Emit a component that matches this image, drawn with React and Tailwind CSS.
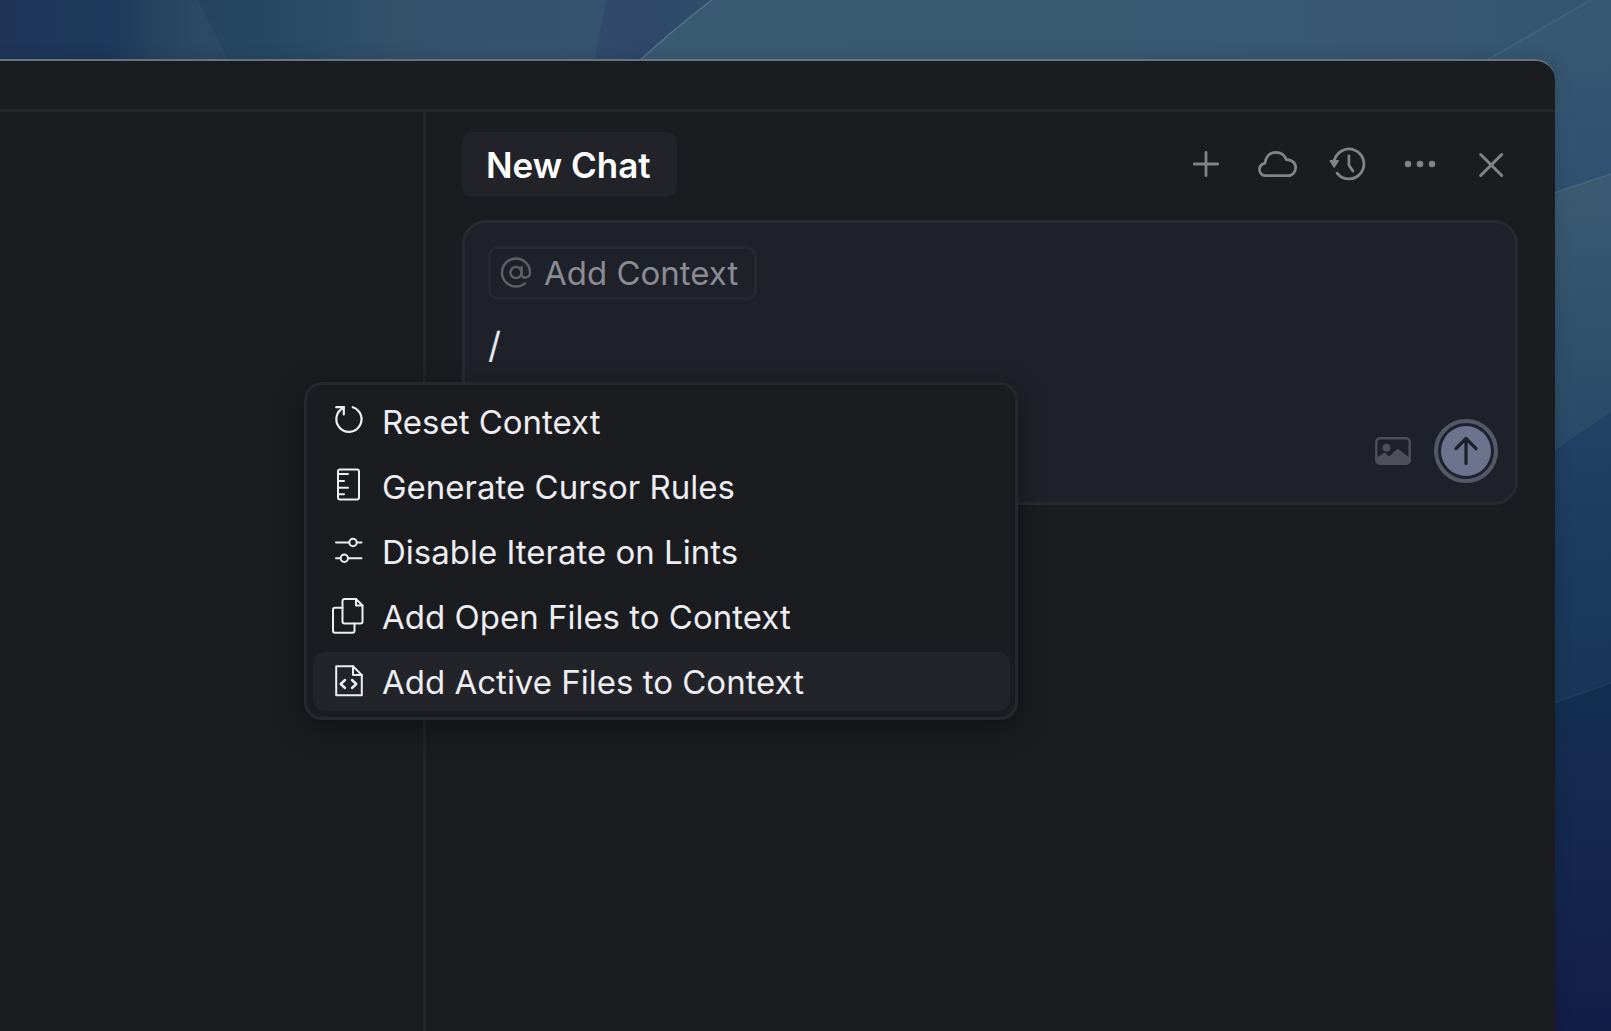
import React, { useState } from "react";

function Wallpaper() {
  return (
    <svg
      className="absolute inset-0 h-full w-full"
      viewBox="0 0 1611 1031"
      preserveAspectRatio="none"
      aria-hidden="true"
    >
      <defs>
        <linearGradient id="top" x1="0" x2="1611" y1="0" y2="0" gradientUnits="userSpaceOnUse">
          <stop offset="0" stopColor="#1e3558" />
          <stop offset="0.07" stopColor="#1e395b" />
          <stop offset="0.12" stopColor="#25435f" />
          <stop offset="0.17" stopColor="#284862" />
          <stop offset="0.25" stopColor="#33526a" />
          <stop offset="0.37" stopColor="#35536f" />
        </linearGradient>
        <linearGradient id="wedge" x1="110" x2="225" y1="0" y2="0" gradientUnits="userSpaceOnUse">
          <stop offset="0" stopColor="#2c4a64" stopOpacity="0" />
          <stop offset="1" stopColor="#2d4b65" />
        </linearGradient>
        <linearGradient id="band" x1="594" x2="712" y1="0" y2="0" gradientUnits="userSpaceOnUse">
          <stop offset="0" stopColor="#314b6c" />
          <stop offset="0.5" stopColor="#2f4769" />
          <stop offset="1" stopColor="#2e4f6c" />
        </linearGradient>
        <linearGradient id="sky" x1="640" x2="1611" y1="0" y2="0" gradientUnits="userSpaceOnUse">
          <stop offset="0" stopColor="#3a5a72" />
          <stop offset="0.5" stopColor="#395971" />
          <stop offset="0.8" stopColor="#385672" />
          <stop offset="1" stopColor="#34566d" />
        </linearGradient>
        <linearGradient id="sideA" x1="0" x2="0" y1="40" y2="193" gradientUnits="userSpaceOnUse">
          <stop offset="0" stopColor="#375872" />
          <stop offset="1" stopColor="#2f5070" />
        </linearGradient>
        <linearGradient id="sideB" x1="0" x2="0" y1="185" y2="450" gradientUnits="userSpaceOnUse">
          <stop offset="0" stopColor="#3b5a72" />
          <stop offset="0.5" stopColor="#31526b" />
          <stop offset="1" stopColor="#284a68" />
        </linearGradient>
        <linearGradient id="sideC" x1="0" x2="0" y1="420" y2="700" gradientUnits="userSpaceOnUse">
          <stop offset="0" stopColor="#234164" />
          <stop offset="0.5" stopColor="#1b3a5c" />
          <stop offset="1" stopColor="#193659" />
        </linearGradient>
        <linearGradient id="sideD" x1="0" x2="0" y1="690" y2="1031" gradientUnits="userSpaceOnUse">
          <stop offset="0" stopColor="#122f50" />
          <stop offset="0.2" stopColor="#152b50" />
          <stop offset="0.6" stopColor="#14254c" />
          <stop offset="1" stopColor="#121d48" />
        </linearGradient>
      </defs>
      <rect width="1611" height="1031" fill="url(#top)" />
      <path d="M100 0 H198 L229 62 H100Z" fill="url(#wedge)" />
      <path d="M606 0 L594 62 H712 V0Z" fill="url(#band)" />
      <path d="M712 0 Q674 29 638 62 H1611 V0Z" fill="url(#sky)" />
      <path d="M712 0 Q674 29 638 62" fill="none" stroke="#547288" strokeWidth="1.5" />
      <path d="M1591 0 L1484 62 L1555 215 H1611 V0Z" fill="url(#sideA)" />
      <path d="M1591 0 L1484 62" stroke="#41637a" strokeWidth="2" />
      <path d="M1500 211 L1611 174 V490 H1500Z" fill="url(#sideB)" />
      <path d="M1500 211 L1611 174" stroke="#48667d" strokeWidth="1.5" />
      <path d="M1500 487 L1611 412 V724 H1500Z" fill="url(#sideC)" />
      <path d="M1500 722 L1611 683 V1031 H1500Z" fill="url(#sideD)" />
      <path d="M1500 722 L1611 683" stroke="#27405f" strokeWidth="1" />
    </svg>
  );
}

const PlusIcon = () => (
  <svg width="40" height="40" viewBox="0 0 40 40" fill="none" stroke="currentColor" strokeWidth="2.8" strokeLinecap="round">
    <path d="M19 8.3v23.400M7.300 20h23.400" />
  </svg>
);

const CloudIcon = () => (
  <svg width="40" height="40" viewBox="0 0 40 40" fill="none" stroke="currentColor" strokeWidth="2.8" strokeLinejoin="round">
    <path d="M8 31.7C4 31.7 1.500 29 1.500 25.500C1.500 22.300 3.500 20.200 7 19.200C7.800 12.500 12 8.300 18 8.300C23 8.300 26.500 11 28.200 15.500C34 15.500 37.700 19 37.700 23.600C37.700 28.300 34.200 31.700 29.500 31.700Z" />
  </svg>
);

const HistoryIcon = () => (
  <svg width="40" height="40" viewBox="0 0 40 40" fill="none" stroke="currentColor" strokeWidth="2.8" strokeLinecap="round">
    <path d="M5 18.500A15 15 0 1 1 8.100 29.200" />
    <path d="M19.900 12v9l4 6" />
    <path d="M1.200 16.800h8L5.200 23.200Z" fill="currentColor" strokeWidth="1.400" strokeLinejoin="round" />
  </svg>
);

const DotsIcon = () => (
  <svg width="40" height="40" viewBox="0 0 40 40" fill="currentColor">
    <circle cx="8" cy="20" r="3.300" />
    <circle cx="20" cy="20" r="3.300" />
    <circle cx="32" cy="20" r="3.300" />
  </svg>
);

const CloseIcon = () => (
  <svg width="40" height="40" viewBox="0 0 40 40" fill="none" stroke="currentColor" strokeWidth="3" strokeLinecap="round">
    <path d="M9.700 10.500l21 21M30.700 10.500l-21 21" />
  </svg>
);

const AtIcon = () => (
  <svg width="32" height="32" viewBox="0 0 32 32" fill="none" stroke="currentColor" strokeWidth="2.400" strokeLinecap="round">
    <circle cx="16" cy="15.500" r="5.600" />
    <path d="M21.600 10.100v7.200c0 4.800 8.400 4.400 8.400-1.800A14 14 0 1 0 16 29.500c3.600 0 6.500-1 9-3.100" />
  </svg>
);

const ImageIcon = () => (
  <svg width="36" height="28" viewBox="0 0 36 28" fill="currentColor">
    <rect x="1.300" y="1.300" width="33.400" height="25.400" rx="3.500" fill="none" stroke="currentColor" strokeWidth="2.400" />
    <circle cx="11.500" cy="10.700" r="4" />
    <path d="M1.500 21l7-4.900q.900-.600 1.800 0l3.900 3.200 7.400-6.800q1.200-1 2.400 0l10.500 8.300V24q0 3-3 3H4.500q-3 0-3-3Z" />
  </svg>
);

const ArrowUpIcon = () => (
  <svg width="40" height="40" viewBox="0 0 40 40" fill="none" stroke="currentColor" strokeWidth="3.200" strokeLinecap="round" strokeLinejoin="round">
    <path d="M20 32.500v-25M10 17.500l10-10 10 10" />
  </svg>
);

const MenuIcon = ({ children }) => (
  <svg
    className="shrink-0"
    width="40"
    height="40"
    viewBox="0 0 40 40"
    fill="none"
    stroke="currentColor"
    strokeWidth="2"
    strokeLinecap="round"
    strokeLinejoin="round"
    aria-hidden="true"
  >
    {children}
  </svg>
);

const commands = [
  {
    label: "Reset Context",
    icon: (
      <>
        <path d="M24.700 5.200A12.600 12.600 0 1 1 15.600 5.800" strokeWidth="2.200" />
        <path d="M8.200 5.200h7.600v7.300" strokeWidth="2.200" strokeLinejoin="miter" />
      </>
    ),
  },
  {
    label: "Generate Cursor Rules",
    icon: (
      <>
        <rect x="10" y="2.500" width="21" height="30" rx="2" />
        <path d="M10 7.100h10M10 14h6M10 20.700h10M10 27.300h6" />
      </>
    ),
  },
  {
    label: "Disable Iterate on Lints",
    icon: (
      <>
        <path d="M8 10.500h13.200M28.800 10.500H33.500M8 26.200h4.500M20.100 26.200H33.500" />
        <circle cx="25" cy="10.500" r="3.700" />
        <circle cx="16.300" cy="26.200" r="3.700" />
      </>
    ),
  },
  {
    label: "Add Open Files to Context",
    icon: (
      <>
        <path d="M28 2H16.500q-2 0-2 2v20.500q0 2 2 2h16q2 0 2-2V8.500Z" />
        <path d="M28 2v6.500h6.500" />
        <path d="M14.500 10.700H7q-2 0-2 2v21q0 2 2 2h17.500q2 0 2-2v-7.200" />
      </>
    ),
  },
  {
    label: "Add Active Files to Context",
    icon: (
      <>
        <path d="M25 4.300H8.200v29h25.600V13.100Z" />
        <path d="M25 4.300v8.800h8.800" />
        <path d="M17 18l-4.300 4 4.300 4M24 18l4.300 4-4.300 4" strokeWidth="2.400" />
      </>
    ),
  },
];

function HeaderButton({ label, children }) {
  return (
    <button type="button" aria-label={label} className="flex size-10 items-center justify-center">
      {children}
    </button>
  );
}

function CommandMenu() {
  const [active, setActive] = useState(4);
  return (
    <div
      role="menu"
      className="absolute top-[159px] -left-[161px] z-10 flex w-[714px] flex-col gap-1.5 rounded-[18px] border-3 border-[#27282d] bg-[#1b1c20] pt-[7px] pr-[5px] pb-[6px] pl-[6px] shadow-[0_8px_28px_rgba(0,0,0,0.35)]"
    >
      {commands.map((command, i) => (
        <button
          key={command.label}
          type="button"
          role="menuitem"
          onMouseEnter={() => setActive(i)}
          className={
            i === active
              ? "flex h-[59px] items-center gap-[14px] rounded-xl bg-[#232429] pl-[15px] text-left"
              : "flex h-[59px] items-center gap-[14px] rounded-xl pl-[15px] text-left"
          }
        >
          <MenuIcon>{command.icon}</MenuIcon>
          <span className="text-[33px] leading-10 whitespace-nowrap">{command.label}</span>
        </button>
      ))}
    </div>
  );
}

function Composer() {
  const [text, setText] = useState("/");
  return (
    <form
      onSubmit={(e) => e.preventDefault()}
      className="relative flex flex-col rounded-3xl border-3 border-[#292a31] bg-[#1f212a] px-[23px] pt-[23px] pb-[19px]"
    >
      <button
        type="button"
        className="flex h-[54px] items-center gap-3 self-start rounded-[10px] border-3 border-[#272931] pr-4 pl-[9px] text-[#5e6068]"
      >
        <AtIcon />
        <span className="text-[33px] leading-10 text-[#8a8c94]">Add Context</span>
      </button>
      <textarea
        aria-label="Message"
        rows={1}
        value={text}
        onChange={(e) => setText(e.target.value)}
        className="mt-[25px] block h-12 resize-none overflow-hidden bg-transparent text-[36px] leading-10 text-[#e6e7ec] outline-none"
      />
      <div className="mt-[46px] flex items-center justify-end gap-[23px]">
        <button type="button" aria-label="Attach image" className="text-[#4d5059]">
          <ImageIcon />
        </button>
        <button
          type="submit"
          aria-label="Send"
          className="-mr-[6px] flex size-16 items-center justify-center rounded-full border-4 border-[#555967] bg-[#1e2230] p-[3px] text-[#1b222d]"
        >
          <span className="flex size-full items-center justify-center rounded-full bg-[#6c738d]">
            <ArrowUpIcon />
          </span>
        </button>
      </div>
      <CommandMenu />
    </form>
  );
}

export default function App() {
  return (
    <div className="relative h-screen overflow-hidden bg-[#1e3558] font-['Inter','Liberation_Sans',sans-serif] font-[420] text-[#ededf2]">
      <Wallpaper />
      <div className="relative flex h-full flex-col pt-[59px] pr-14">
        <div className="flex flex-1 flex-col overflow-hidden rounded-tr-[20px] border-t-2 border-t-[#66727e] bg-[#1b1c20] shadow-[0_0_16px_rgba(0,0,0,0.15)]">
          <div className="h-12 shrink-0" />
          <div className="flex flex-1 border-t-3 border-[#242529]">
            <div className="w-[426px] shrink-0 border-r-3 border-[#242529]" />
            <main className="min-w-0 flex-1 pt-5 pr-[37px] pl-9">
              <header className="mb-[23px] flex items-center justify-between">
                <h1 className="rounded-[10px] bg-[#222328] pt-[13px] pr-[26px] pb-3 pl-6 text-[35px] leading-10 font-semibold text-white">
                  New Chat
                </h1>
                <div className="mr-[7px] mb-0.5 flex items-center gap-[31px] text-[#828287]">
                  <HeaderButton label="New chat"><PlusIcon /></HeaderButton>
                  <HeaderButton label="Background agents"><CloudIcon /></HeaderButton>
                  <HeaderButton label="Chat history"><HistoryIcon /></HeaderButton>
                  <HeaderButton label="More actions"><DotsIcon /></HeaderButton>
                  <HeaderButton label="Close"><CloseIcon /></HeaderButton>
                </div>
              </header>
              <Composer />
            </main>
          </div>
        </div>
      </div>
    </div>
  );
}
